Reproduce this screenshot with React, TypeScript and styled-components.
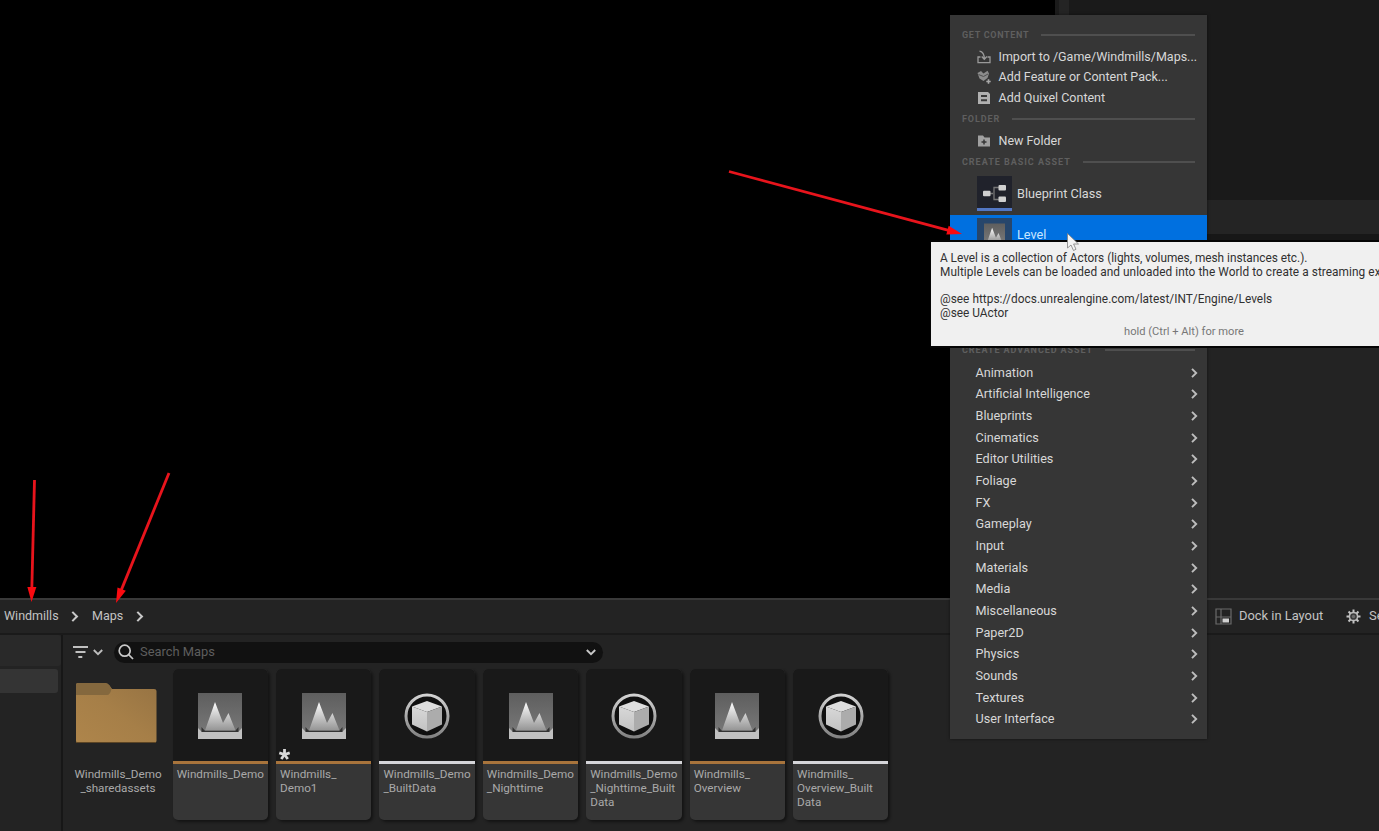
import React from "react";
import styled, { createGlobalStyle } from "styled-components";

const GlobalStyle = createGlobalStyle`
  * { box-sizing: border-box; }
  body { margin: 0; background: #000; overflow: hidden; }
  svg { flex-shrink: 0; }
`;

const Screen = styled.div`
  position: relative;
  width: 1379px;
  height: 831px;
  overflow: hidden;
  display: flex;
  flex-direction: column;
  background: #000;
  color: #c4c4c4;
  font: 13px/16px Roboto, "Liberation Sans", sans-serif;
  white-space: nowrap;
`;

/* ---------- editor area ---------- */
const Editor = styled.div`
  display: grid;
  grid-template-columns: 1055px 14px 1fr;
  height: 598px;
`;
const Viewport = styled.div`background: #000;`;
const Splitter = styled.div`
  background: #242424;
  border-left: 4px solid #1b1b1b;
`;
const Details = styled.div`
  display: flex;
  flex-direction: column;
  background: #232323;
`;
const Outliner = styled.div`
  height: 200px;
  background: #1a1a1a;
`;
const DetailsTab = styled.div`
  height: 40px;
  background: #242424;
  border-bottom: 6px solid #171717;
`;

/* ---------- content drawer ---------- */
const Drawer = styled.div`
  flex: 1;
  display: flex;
  flex-direction: column;
  background: #232323;
  border-top: 2px solid #393939;
`;
const DrawerBar = styled.div`
  height: 35px;
  display: flex;
  align-items: center;
  padding: 0 0 1px 4px;
  border-bottom: 2px solid #1a1a1a;
`;
const Crumb = styled.span`
  width: ${(p: { $w: number }) => p.$w}px;
  font-size: 12.5px;
`;
const CrumbArrow = styled.span`
  display: flex;
  width: ${(p: { $w: number }) => p.$w}px;
`;
const BarActions = styled.div`
  display: flex;
  align-items: center;
  margin-left: auto;
  width: 164px;
`;
const ActionLabel = styled.span`
  width: 84px;
  margin: 0 23px 0 7px;
  font-size: 12.9px;
`;
const SettingsLabel = styled.span`margin-left: 8px;`;

const DrawerBody = styled.div`
  flex: 1;
  display: flex;
`;
const Sources = styled.div`
  width: 63px;
  border-right: 2px solid #171717;
  display: flex;
  flex-direction: column;
  gap: 3px;
`;
const SourceRow = styled.div`
  width: ${(p: { $active?: boolean }) => (p.$active ? 58 : 61)}px;
  height: ${(p) => (p.$active ? 24 : 31)}px;
  border-radius: 0 3px 3px 0;
  background: ${(p) => (p.$active ? "#343434" : "#292929")};
`;
const Assets = styled.div`
  flex: 1;
  display: flex;
  flex-direction: column;
`;
const FilterRow = styled.div`
  display: flex;
  align-items: center;
  height: 34px;
  padding-left: 10px;
`;
const FilterButton = styled.div`
  display: flex;
  align-items: center;
  gap: 5px;
  width: 41px;
`;
const SearchBox = styled.div`
  display: flex;
  align-items: center;
  width: 489px;
  height: 21px;
  padding: 0 7px 0 4px;
  border-radius: 11px;
  background: #111;
  color: #5e5e5e;
`;
const SearchText = styled.span`
  flex: 1;
  margin-left: 6px;
  font-size: 12.9px;
`;
const TileRow = styled.div`
  display: flex;
  gap: 8px;
  padding-left: 6.3px;
`;
const Tile = styled.div`
  width: 95.4px;
  height: 151px;
  border-radius: 5px;
  background: #363636;
  box-shadow: 2px 2px 3px rgba(0, 0, 0, 0.45);
  overflow: hidden;
`;
const Thumb = styled.div`
  position: relative;
  height: 95px;
  display: flex;
  align-items: center;
  justify-content: center;
  padding-top: 1px;
  background: #191919;
  border-bottom: 3px solid ${(p: { $accent: string }) => p.$accent};
`;
const DirtyMark = styled.svg`
  position: absolute;
  left: 2px;
  bottom: 0;
`;
const TileName = styled.div`
  padding: 3px 0 0 4px;
  font-size: 11.7px;
  line-height: 14px;
  color: #a9a9a9;
  white-space: pre;
`;
const FolderTile = styled.div`
  width: 95.4px;
  display: flex;
  flex-direction: column;
  align-items: center;
  padding: 13px 1px 0 0;
`;
const FolderName = styled(TileName)`
  padding: 23px 0 0 3px;
  text-align: center;
`;

/* ---------- context menu ---------- */
const Menu = styled.div`
  position: absolute;
  left: 950px;
  top: 15px;
  width: 257px;
  height: 724px;
  padding-top: 8.6px;
  background: #363636;
  box-shadow: 0 0 3px rgba(0, 0, 0, 0.5);
  color: #d8d8d8;
  font-size: 12.5px;
`;
const Heading = styled.div`
  display: flex;
  align-items: center;
  gap: 12px;
  height: 22.4px;
  padding: 0 12px;
  font-size: 9px;
  font-weight: 700;
  letter-spacing: ${(p: { $track: number }) => p.$track}px;
  color: #5f5f5f;
  &::after {
    content: "";
    flex: 1;
    height: 2px;
    background: #4f4f4f;
  }
`;
const MenuItem = styled.div`
  display: flex;
  align-items: center;
  gap: 8px;
  height: 20.6px;
  padding: 1px 0 0 26.5px;
`;
const AssetItem = styled.div`
  display: flex;
  align-items: center;
  gap: 5px;
  height: 41.4px;
  padding-left: 27px;
  background: ${(p: { $selected?: boolean }) => (p.$selected ? "#0070e0" : "transparent")};
  color: ${(p) => (p.$selected ? "#c9e6ff" : "#d8d8d8")};
  font-size: 12.7px;
`;
const AssetIcon = styled.div`
  width: 35px;
  height: 35px;
  display: flex;
  align-items: center;
  justify-content: center;
  padding-top: 2px;
  background: ${(p: { $selected?: boolean }) => (p.$selected ? "#27466b" : "#20222b")};
  border-bottom: 3px solid ${(p) => (p.$selected ? "#b07a3c" : "#5377c4")};
`;
const CoveredItems = styled.div`height: 83px;`;
const SubItem = styled.div`
  display: flex;
  align-items: center;
  justify-content: space-between;
  height: 21.66px;
  padding: 1.4px 8px 0 25.5px;
  font-size: 12.65px;
`;

const Tooltip = styled.div`
  position: absolute;
  left: 930px;
  top: 240px;
  width: 520px;
  height: 108px;
  padding: 10px 9px;
  background: #f0f0f0;
  border: 2px solid #050505;
  border-left-width: 1px;
  color: #303030;
  font-size: 11.85px;
  line-height: 13.8px;
`;
const TipLine = styled.div`
  height: 13.8px;
  letter-spacing: ${(p: { $track?: number }) => p.$track ?? 0}px;
`;
const TipHint = styled.div`
  margin: 4px 0 0 184px;
  font-size: 11.15px;
  color: #777;
`;
const Cursor = styled.svg`
  position: absolute;
  left: 1066px;
  top: 232px;
`;
const Annotations = styled.svg`
  position: absolute;
  left: 0;
  top: 0;
`;

/* ---------- icons ---------- */
const Chevron = ({ down = false, size = 10, color = "#bdbdbd" }) => (
  <svg width={size} height={size} viewBox="0 0 10 10" fill="none" stroke={color} strokeWidth="1.900">
    <path d={down ? "M0.800 3 5 7.200 9.200 3" : "M3 0.800 7.200 5 3 9.200"} />
  </svg>
);

const LevelIcon = ({ size = 44 }) => (
  <svg width={size} height={size * 1.07} viewBox="0 0 44 47">
    <defs>
      <linearGradient id="lvBack" x1="0" y1="0" x2="0" y2="1">
        <stop offset="0" stopColor="#5e5e5e" />
        <stop offset="1" stopColor="#7c7c7c" />
      </linearGradient>
      <linearGradient id="lvPeak" x1="0" y1="0" x2="0" y2="1">
        <stop offset="0" stopColor="#fff" />
        <stop offset="1" stopColor="#949494" />
      </linearGradient>
    </defs>
    <path d="M0 1H44V47H0Z" fill="url(#lvBack)" />
    <path d="M0 36 3.500 39.500H40.500L44 36V47H0Z" fill="#c0c0c0" />
    <path d="M3.500 35V40H40.500V35L37.500 38.500H6.500Z" fill="#333" />
    <path d="M7 38.500 17 10 25 31 30.500 21 37.500 38.500Z" fill="url(#lvPeak)" />
  </svg>
);

const CubeIcon = () => (
  <svg width="46" height="46" viewBox="0 0 46 46">
    <defs>
      <linearGradient id="ring" x1="0" y1="0" x2="0" y2="1">
        <stop offset="0" stopColor="#d2d2d2" />
        <stop offset="1" stopColor="#828282" />
      </linearGradient>
      <linearGradient id="face" x1="0" y1="0" x2="0" y2="1">
        <stop offset="0" stopColor="#d8d8d8" />
        <stop offset="1" stopColor="#c2c2c2" />
      </linearGradient>
    </defs>
    <circle cx="23" cy="23" r="21" fill="#101010" stroke="url(#ring)" strokeWidth="3" />
    <path d="M23 8 38 13.500 23 19 8 13.500Z" fill="#dedede" />
    <path d="M8 13.500 23 19V38.500L8 31.500Z" fill="url(#face)" />
    <path d="M38 13.500 23 19V38.500L38 31.500Z" fill="#acacac" />
  </svg>
);

const FolderIcon = () => (
  <svg width="81" height="62" viewBox="0 0 81 62">
    <defs>
      <linearGradient id="fold" x1="0" y1="1" x2="1" y2="0">
        <stop offset="0" stopColor="#ae854b" />
        <stop offset="0.5" stopColor="#a67f48" />
        <stop offset="1" stopColor="#967343" />
      </linearGradient>
    </defs>
    <path d="M0 3Q0 1 2 1H29Q32 1 33.500 3.500L36 7H78Q80.500 7 80.500 9V59Q80.500 61 78 61H2Q0 61 0 59Z" fill="url(#fold)" />
    <path d="M0 3Q0 1 2 1H29Q32 1 33.500 3.500L35.500 7Q34 13 31 13H0Z" fill="#84683e" />
    <path d="M0 60.500H80" stroke="#5c4525" />
  </svg>
);

const ImportIcon = () => (
  <svg width="14" height="14" viewBox="0 0 14 14" fill="none" stroke="#9a9a9a" strokeWidth="1.300">
    <path d="M3.500 7H1V12.700H13V7H10.500" />
    <path d="M2.500 1.200Q7.300 2 7.300 9M4.700 6.500 7.300 9.200 9.900 6.500" />
  </svg>
);
const PackIcon = () => (
  <svg width="14" height="14" viewBox="0 0 14 14">
    <path d="M0.500 3 4 1 6.500 3.500 10.500 0.800 12 3.500 10.500 8 6.500 11 2.500 8.500Z" fill="#8c8c8c" />
    <path d="M1.500 4.500 6.500 6.500 11 4" stroke="#505050" fill="none" />
    <path d="M11.500 9.300V13.700M9.300 11.500H13.700" stroke="#a8a8a8" strokeWidth="1.600" />
  </svg>
);
const QuixelIcon = () => (
  <svg width="14" height="14" viewBox="0 0 14 14">
    <path d="M1 1H11L13 3V13H1Z" fill="#b0b0b0" />
    <path d="M4 4H10V6H4ZM4 8.200H10V10.200H4Z" fill="#3a3a3a" />
  </svg>
);
const NewFolderIcon = () => (
  <svg width="14" height="14" viewBox="0 0 14 14">
    <path d="M1 1.500H6L7.500 3.500H13V12.500H1Z" fill="#a0a0a0" />
    <path d="M7 5.500V10.500M4.500 8H9.500" stroke="#363636" strokeWidth="1.500" />
  </svg>
);
const BlueprintIcon = () => (
  <svg width="25" height="19" viewBox="0 0 25 19">
    <path d="M8 9.500H11M18 3.500H12V15.500H18" fill="none" stroke="#777" strokeWidth="1.300" />
    <rect x="1" y="6.700" width="7.500" height="5.500" rx="1" fill="#d0d0d0" />
    <rect x="16.500" y="1" width="7.500" height="5.500" rx="1" fill="#d0d0d0" />
    <rect x="16.500" y="12.500" width="7.500" height="5.500" rx="1" fill="#d0d0d0" />
  </svg>
);
const FilterIcon = () => (
  <svg width="15" height="13" viewBox="0 0 15 13" stroke="#c0c0c0" strokeWidth="2">
    <path d="M0 1H15M2.500 6H12.500M5.300 11H9.300" />
  </svg>
);
const SearchIcon = () => (
  <svg width="16" height="16" viewBox="0 0 16 16" fill="none" stroke="#c8c8c8" strokeWidth="1.700">
    <circle cx="6.700" cy="6.700" r="5.500" />
    <path d="M10.700 10.700 15 15" />
  </svg>
);
const DockIcon = () => (
  <svg width="17" height="17" viewBox="0 0 17 17">
    <path d="M1 1H16V16H1ZM6 1V16M1 9H16" fill="none" stroke="#6a6a6a" strokeWidth="1.200" />
    <rect x="7.500" y="10.500" width="6.500" height="4" fill="#d0d0d0" />
  </svg>
);
const GearIcon = () => (
  <svg width="15" height="15" viewBox="0 0 15 15">
    {[0, 45, 90, 135].map((a) => (
      <path key={a} d="M7.500 0.500V3.500M7.500 11.500V14.500" stroke="#c4c4c4" strokeWidth="2" transform={`rotate(${a} 7.5 7.5)`} />
    ))}
    <circle cx="7.500" cy="7.500" r="4.100" fill="#3c3c3c" stroke="#bcbcbc" strokeWidth="1.500" />
    <circle cx="7.500" cy="7.500" r="1.700" fill="#6c6c6c" />
  </svg>
);

type Asset = { name: string; kind: "level" | "data"; dirty?: boolean };
const assets: Asset[] = [
  { name: "Windmills_Demo", kind: "level" },
  { name: "Windmills_\nDemo1", kind: "level", dirty: true },
  { name: "Windmills_Demo\n_BuiltData", kind: "data" },
  { name: "Windmills_Demo\n_Nighttime", kind: "level" },
  { name: "Windmills_Demo\n_Nighttime_Built\nData", kind: "data" },
  { name: "Windmills_\nOverview", kind: "level" },
  { name: "Windmills_\nOverview_Built\nData", kind: "data" },
];

const categories = [
  "Animation", "Artificial Intelligence", "Blueprints", "Cinematics", "Editor Utilities", "Foliage",
  "FX", "Gameplay", "Input", "Materials", "Media", "Miscellaneous", "Paper2D", "Physics", "Sounds",
  "Textures", "User Interface",
];

const arrows = [
  { x1: 34.5, y1: 480, x2: 31.5, y2: 602 },
  { x1: 169, y1: 473, x2: 116, y2: 603 },
  { x1: 729, y1: 171.5, x2: 962, y2: 234 },
];

const Arrow = ({ x1, y1, x2, y2 }: (typeof arrows)[number]) => {
  const angle = (Math.atan2(y2 - y1, x2 - x1) * 180) / Math.PI;
  const length = Math.hypot(x2 - x1, y2 - y1);
  return (
    <g transform={`translate(${x1} ${y1}) rotate(${angle})`}>
      <path d={`M0 0H${length - 12}`} stroke="#e8141c" strokeWidth="2.800" />
      <path d={`M${length} 0L${length - 15} -4.500V4.500Z`} fill="#fa0a10" />
    </g>
  );
};

export default function App() {
  return (
    <Screen>
      <GlobalStyle />
      <Editor>
        <Viewport />
        <Splitter />
        <Details>
          <Outliner />
          <DetailsTab />
        </Details>
      </Editor>

      <Drawer>
        <DrawerBar>
          <Crumb $w={65}>Windmills</Crumb>
          <CrumbArrow $w={23}><Chevron size={11} color="#c8c8c8" /></CrumbArrow>
          <Crumb $w={42}>Maps</Crumb>
          <CrumbArrow $w={22}><Chevron size={11} color="#c8c8c8" /></CrumbArrow>
          <BarActions>
            <DockIcon />
            <ActionLabel>Dock in Layout</ActionLabel>
            <GearIcon />
            <SettingsLabel>Settings</SettingsLabel>
          </BarActions>
        </DrawerBar>
        <DrawerBody>
          <Sources>
            <SourceRow />
            <SourceRow $active />
          </Sources>
          <Assets>
            <FilterRow>
              <FilterButton>
                <FilterIcon />
                <Chevron down />
              </FilterButton>
              <SearchBox>
                <SearchIcon />
                <SearchText>Search Maps</SearchText>
                <Chevron down color="#c8c8c8" />
              </SearchBox>
            </FilterRow>
            <TileRow>
              <FolderTile>
                <FolderIcon />
                <FolderName>{"Windmills_Demo\n_sharedassets"}</FolderName>
              </FolderTile>
              {assets.map((a) => (
                <Tile key={a.name}>
                  <Thumb $accent={a.kind === "level" ? "#a8743c" : "#d4d4d8"}>
                    {a.kind === "level" ? <LevelIcon /> : <CubeIcon />}
                    {a.dirty && (
                      <DirtyMark width="13" height="13" viewBox="-6.5 -6.5 13 13" stroke="#d8d8d8" strokeWidth="2.800">
                        {[0, 72, 144, 216, 288].map((r) => (
                          <path key={r} d="M0 0V-5.500" transform={`rotate(${r})`} />
                        ))}
                      </DirtyMark>
                    )}
                  </Thumb>
                  <TileName>{a.name}</TileName>
                </Tile>
              ))}
            </TileRow>
          </Assets>
        </DrawerBody>
      </Drawer>

      <Menu>
        <Heading $track={0.7}>GET CONTENT</Heading>
        <MenuItem><ImportIcon />Import to /Game/Windmills/Maps...</MenuItem>
        <MenuItem><PackIcon />Add Feature or Content Pack...</MenuItem>
        <MenuItem><QuixelIcon />Add Quixel Content</MenuItem>
        <Heading $track={0.9}>FOLDER</Heading>
        <MenuItem><NewFolderIcon />New Folder</MenuItem>
        <Heading $track={0.98}>CREATE BASIC ASSET</Heading>
        <AssetItem>
          <AssetIcon><BlueprintIcon /></AssetIcon>
          Blueprint Class
        </AssetItem>
        <AssetItem $selected>
          <AssetIcon $selected><LevelIcon size={21} /></AssetIcon>
          Level
        </AssetItem>
        <CoveredItems />
        <Heading $track={0.92}>CREATE ADVANCED ASSET</Heading>
        {categories.map((c) => (
          <SubItem key={c}>{c}<Chevron /></SubItem>
        ))}
      </Menu>

      <Tooltip>
        <TipLine $track={-0.02}>A Level is a collection of Actors (lights, volumes, mesh instances etc.).</TipLine>
        <TipLine $track={0.06}>Multiple Levels can be loaded and unloaded into the World to create a streaming experience.</TipLine>
        <TipLine />
        <TipLine $track={0.03}>@see https://docs.unrealengine.com/latest/INT/Engine/Levels</TipLine>
        <TipLine>@see UActor</TipLine>
        <TipHint>hold (Ctrl + Alt) for more</TipHint>
      </Tooltip>

      <Cursor width="14" height="20" viewBox="0 0 14 20">
        <path d="M1.500 1.500V16L5 13L7.500 18.500L10 17.300L7.600 12H12.500Z" fill="#f4f4f4" stroke="#808080" strokeWidth="0.800" />
      </Cursor>

      <Annotations width="1379" height="831" viewBox="0 0 1379 831">
        {arrows.map((a) => <Arrow key={a.x1} {...a} />)}
      </Annotations>
    </Screen>
  );
}
